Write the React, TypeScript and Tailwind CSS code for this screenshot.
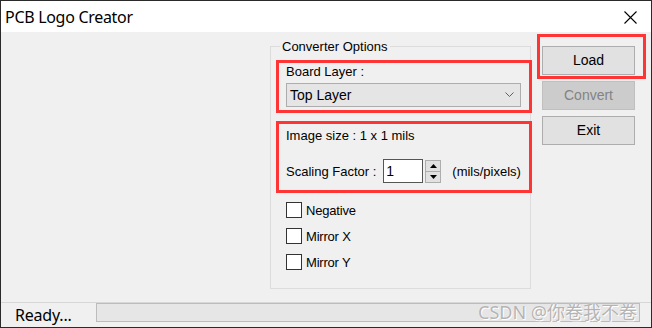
import React from "react";

const ui = "font-['Liberation_Sans',Arial,sans-serif] text-[13px] leading-[15px] text-black";

function Checkbox({ label }: { label: string }) {
  return (
    <label className="flex h-[16px] items-center gap-[4px]">
      <span className="h-[16px] w-[16px] border border-[#333333] bg-white" />
      <span className="tracking-[-0.2px]">{label}</span>
    </label>
  );
}

function Button({ children, disabled }: { children: React.ReactNode; disabled?: boolean }) {
  return (
    <button
      disabled={disabled}
      className={
        disabled
          ? "flex h-[29px] w-[93px] items-center justify-center border border-[#bfbfbf] bg-[#cccccc] text-[14px] text-[#838383]"
          : "flex h-[29px] w-[93px] items-center justify-center border border-[#adadad] bg-[#e1e1e1] text-[14px]"
      }
    >
      {children}
    </button>
  );
}

export default function App() {
  return (
    <div className={`flex h-[328px] w-[652px] flex-col border border-[#2a2a2a] bg-[#f0f0f0] ${ui}`}>
      {/* title bar */}
      <div className="flex h-[31px] shrink-0 items-center justify-between bg-white pl-[4px] pr-[14px]">
        <span className="font-['Noto_Sans',sans-serif] text-[16px] leading-[20px] tracking-[-0.3px]">PCB Logo Creator</span>
        <svg width="13" height="13" viewBox="0 0 13 13" className="mt-[1px]">
          <path d="M0.5 0.5 L12.5 12.5 M12.5 0.5 L0.5 12.5" stroke="#000" strokeWidth="1.1" />
        </svg>
      </div>

      {/* body */}
      <div className="flex flex-1">
        <div className="w-[269px] shrink-0" />

        {/* group box */}
        <div className="relative mt-[14px] h-[243px] w-[261px] shrink-0 border border-[#dcdcdc] pl-[5px]">
          <span className="absolute -top-[8px] left-[9px] bg-[#f0f0f0] px-[2px]">Converter Options</span>

          <div className="mt-[13px] -mr-[2px] flex flex-col border-[3px] border-[#ff3535] pb-[3px] pl-[7px] pt-[1px]">
            <span>Board Layer :</span>
            <div className="mt-[4px] flex h-[24px] w-[235px] items-center justify-between border border-[#adadad] bg-[#e5e5e5] pl-[3px] pr-[6px]">
              <span className="text-[14px]">Top Layer</span>
              <svg width="9" height="6" viewBox="0 0 9 6">
                <path d="M0.5 0.5 L4.5 4.5 L8.5 0.5" stroke="#606060" fill="none" strokeWidth="1" />
              </svg>
            </div>
          </div>

          <div className="mt-[8px] -mr-[2px] flex flex-col border-[3px] border-[#ff3535] pb-[7px] pl-[7px] pt-[4px]">
            <span>Image size : 1 x 1 mils</span>
            <div className="mt-[16px] flex h-[24px] items-center">
              <span>Scaling Factor :</span>
              <div className="ml-[7px] flex h-[24px] w-[40px] items-center border border-[#555555] bg-white pl-[2px] text-[14px]">1</div>
              <div className="ml-[2px] flex h-[23px] w-[16px] flex-col border border-[#adadad] bg-[#e1e1e1]">
                <div className="flex flex-1 items-center justify-center border-b border-[#adadad]">
                  <svg width="7" height="4" viewBox="0 0 7 4"><path d="M3.5 0 L7 4 L0 4 Z" fill="#000" /></svg>
                </div>
                <div className="flex flex-1 items-center justify-center">
                  <svg width="7" height="4" viewBox="0 0 7 4"><path d="M0 0 L7 0 L3.5 4 Z" fill="#000" /></svg>
                </div>
              </div>
              <span className="ml-[11px]">(mils/pixels)</span>
            </div>
          </div>

          <div className="ml-[10px] mt-[9px] flex flex-col gap-[10px]">
            <Checkbox label="Negative" />
            <Checkbox label="Mirror X" />
            <Checkbox label="Mirror Y" />
          </div>
        </div>

        {/* buttons */}
        <div className="ml-[6px] mt-[2px] flex flex-col">
          <div className="flex h-[45px] w-[109px] border-[3px] border-[#ff3535] pl-[2px] pt-[9px]">
            <Button>Load</Button>
          </div>
          <div className="ml-[5px] mt-[2px] flex flex-col gap-[6px]">
            <Button disabled>Convert</Button>
            <Button>Exit</Button>
          </div>
        </div>
      </div>

      {/* status bar */}
      <div className="flex h-[25px] shrink-0 items-start border-t border-[#d7d7d7]">
        <span className="ml-[14px] mt-[2px] w-[81px] font-['Noto_Sans',sans-serif] text-[16px] leading-[20px] tracking-[-0.2px]">Ready...</span>
        <div className="relative h-[19px] w-[544px] border border-[#bcbcbc] bg-[#e6e6e6]">
          <span className="absolute right-[2px] top-[-3px] font-['Noto_Sans','Noto_Sans_CJK_SC',sans-serif] text-[18px] leading-[22px] text-[#b4b4b4] [text-shadow:0_0_1px_#fff,1px_1px_0_#fff]">
            CSDN @你卷我不卷
          </span>
        </div>
      </div>
    </div>
  );
}
